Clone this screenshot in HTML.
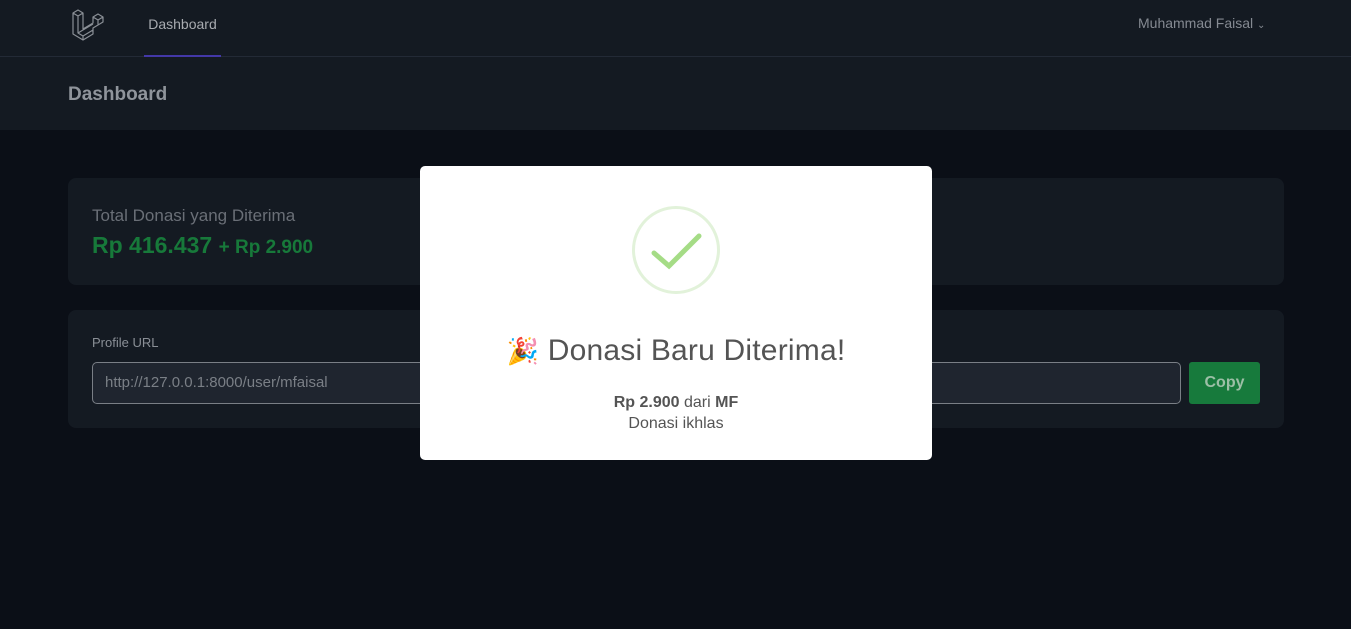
<!DOCTYPE html>
<html><head><meta charset="utf-8"><style>
*{box-sizing:border-box;margin:0;padding:0}
body{width:1351px;height:629px;background:#0b0f17;font-family:"Liberation Sans",sans-serif;position:relative;overflow:hidden}
.nav{position:absolute;left:0;top:0;width:1351px;height:57px;background:#141a22;border-bottom:1px solid #232a36}
.navlink{position:absolute;left:144px;top:0;width:77px;height:57px;border-bottom:2px solid #4338a8;color:#a8abb0;font-size:14px;text-align:center;line-height:48px}
.user{position:absolute;left:1138px;top:15px;color:#858a92;font-size:14px}
.hdr{position:absolute;left:0;top:57px;width:1351px;height:73px;background:#141a22}
.hdr h2{position:absolute;left:68px;top:27px;color:#8f949b;font-size:19px;font-weight:bold}
.card{position:absolute;left:68px;width:1216px;background:#141a22;border-radius:8px}
.t1{position:absolute;left:24px;top:28px;color:#6a6f77;font-size:17px}
.t2{position:absolute;left:24px;top:54px;color:#17793a;font-size:23px;font-weight:bold}
.t2 span{font-size:19px}
.lbl{position:absolute;left:24px;top:25px;color:#8a8f96;font-size:13px}
.inp{position:absolute;left:24px;top:52px;width:1089px;height:42px;background:#1f252f;border:1px solid #7a7f86;border-radius:5px;color:#7a7f86;font-size:15px;padding:11px 12px}
.btn{position:absolute;left:1121px;top:52px;width:71px;height:42px;background:#177a3c;border-radius:3px;color:#9cbfa6;font-weight:bold;font-size:16px;text-align:center;line-height:42px}
.modal{position:absolute;left:420px;top:166px;width:512px;height:294px;background:#fff;border-radius:5px;text-align:center}
.ring{position:absolute;left:212px;top:40px;width:88px;height:88px;border:3px solid #e2f2da;border-radius:50%}
.title{position:absolute;left:0;top:168px;width:512px;color:#545454;font-size:30px;letter-spacing:0.2px}
.sub{position:absolute;left:0;top:226px;width:512px;color:#545454;font-size:16px;line-height:21px}
</style></head><body>
<div class="nav">
<svg style="position:absolute;left:71px;top:7px" width="34" height="34" viewBox="0 0 34 34" fill="none" stroke="#8a8f96" stroke-width="1.2" stroke-linejoin="round">
<path d="M2 6 L7 3 L12 6 L12 22 L22 16 L22 10 L27 7 L32 10 L32 15 L22 21 L22 27 L12 33 L2 27 Z M2 6 L7 9 L12 6 M7 9 L7 26 L12 29 L12 33 M12 29 L22 23 M7 26 L22 17 M22 10 L27 13 L32 10 M27 13 L27 18"/>
</svg>
<div class="navlink">Dashboard</div>
<div class="user">Muhammad Faisal <span style="font-size:10px">&#8964;</span></div>
</div>
<div class="hdr"><h2>Dashboard</h2></div>
<div class="card" style="top:178px;height:107px">
<div class="t1">Total Donasi yang Diterima</div>
<div class="t2">Rp 416.437 <span>+ Rp 2.900</span></div>
</div>
<div class="card" style="top:310px;height:118px">
<div class="lbl">Profile URL</div>
<div class="inp">http://127.0.0.1:8000/user/mfaisal</div>
<div class="btn">Copy</div>
</div>
<div class="modal">
<div class="ring"></div>
<svg style="position:absolute;left:212px;top:40px" width="88" height="88" viewBox="0 0 88 88"><path d="M22 47 L37 60 L67 30" fill="none" stroke="#a5dc86" stroke-width="5" stroke-linecap="round"/></svg>
<div class="title"><span style="font-size:26px">🎉</span> Donasi Baru Diterima!</div>
<div class="sub"><b>Rp 2.900</b> dari <b>MF</b><br>Donasi ikhlas</div>
</div>
</body></html>
